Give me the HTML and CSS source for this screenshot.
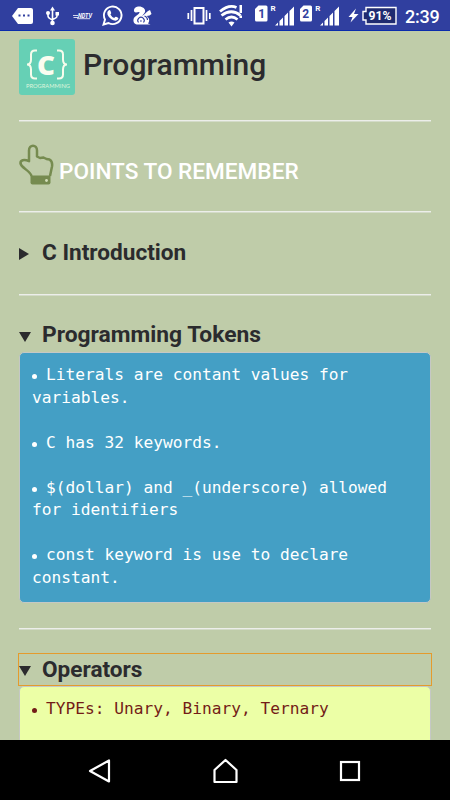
FILE: index.html
```html
<!DOCTYPE html>
<html lang="en">
<head>
    <meta charset="UTF-8">
    <meta name="viewport" content="width=device-width, initial-scale=1.0">
    <title>C Programming</title>
    <link rel="stylesheet" href="styles.css">
</head>
<body>
    <div class="status-bar">
        <svg class="icon-left" width="162" height="30" viewBox="0 0 162 30">
            <!-- message -->
            <path d="M18 8h13q2 0 2 2v12q0 2-2 2H18l-6-8z" fill="#fff"/>
            <path d="M18.500 14.500h2v2h-2zM23 14.500h2v2h-2zM27.500 14.500h2v2h-2z" fill="#303f9f"/>
            <!-- usb -->
            <path d="M52.500 10v12M48 13v3q0 2 4.500 4M57 14v2q0 2-4.500 3.500" fill="none" stroke="#fff" stroke-width="1.600"/>
            <path d="M52.500 6.500l2.500 4h-5zM55.500 12h3.500v3.500h-3.500z" fill="#fff"/>
            <circle cx="48" cy="13" r="2" fill="#fff"/>
            <circle cx="52.500" cy="23" r="2.300" fill="#fff"/>
            <!-- news -->
            <path d="M73 15.500h5M73.500 17.500h5" stroke="#fff" stroke-width=".8"/>
            <text x="78" y="17.500" class="news" textLength="14" lengthAdjust="spacingAndGlyphs">NDTV</text>
            <path d="M77 18.700h13" stroke="#fff" stroke-width=".8"/>
            <!-- whatsapp -->
            <path d="M103.500 24.500l1.500-5a8.800 8.800 0 1 1 3.500 3.500z" fill="none" stroke="#fff" stroke-width="1.900"/>
            <path d="M108.500 10.500q1.500-1 2 .5l.7 1.700q.3.700-.8 1.800 1.300 2.500 3.800 3.600 1.200-1.700 1.900-1.400l2 1q.8.400-.2 1.900-1.600 1.800-4.500.6-4.500-1.800-6-6-.6-2.400 1.100-3.700z" fill="#fff"/>
            <!-- squirrel -->
            <path d="M138 6.500c4-.5 8 2 7 5.500-.5 1.500-2 2.500-3 4 2-1 4-3.500 6-5l2-1 1.500 4-2 1.500-3 .5c3 2 3.500 5 1.500 7.500l2.500 1H138c-3 0-5-2-4.500-5 .5-3.500 5-4.500 6-7 .5-1-2-.5-3.500 0-3 0-3-5 2-6z" fill="#fff"/>
            <path d="M138.500 22.500a3.200 3.200 0 1 1 5 0M140 21h1.800M144.500 16q3 1 3 4" fill="none" stroke="#303f9f" stroke-width="1.100"/>
        </svg>
        <svg class="icon-right" width="168" height="30" viewBox="184 0 168 30">
            <!-- vibrate -->
            <path d="M194.500 8h9v15.500h-9z" fill="none" stroke="#fff" stroke-width="2"/>
            <path d="M191.500 10v11M188.300 13v6M206.500 10v11M209.800 13v6" stroke="#fff" stroke-width="1.700"/>
            <!-- wifi -->
            <path d="M220 11.500q9-7.500 16.500-4M221.500 15.500q10-7.500 19 0M225.500 19.500q6-5 12 0" fill="none" stroke="#fff" stroke-width="2.800"/>
            <path d="M228.500 22.500q3-2 6 0l-3 4zM239.500 5h2.500v8h-2.500zM239.500 15.500h2.500v2.500h-2.500z" fill="#fff"/>
            <!-- sim 1 -->
            <path d="M258.500 5.500H266q1.500 0 1.500 1.500v13q0 1.500-1.500 1.500h-9.500q-1.500 0-1.500-1.500V9z" fill="#fff"/>
            <text x="258.300" y="18" class="sim">1</text>
            <text x="270.500" y="10.500" class="roaming">R</text>
            <path d="M275 25.500l3-3v3zM279.500 21l3.500-3.500v8h-3.500zM284.500 16l3.500-3.500v13h-3.500zM289.500 11l4.500-4.500v19h-4.500z" fill="#fff"/>
            <!-- sim 2 -->
            <path d="M303.500 5.500h7q1.500 0 1.500 1.500v13q0 1.500-1.500 1.500h-9q-1.500 0-1.500-1.500V9z" fill="#fff"/>
            <text x="302.300" y="18" class="sim">2</text>
            <text x="315.300" y="10.500" class="roaming">R</text>
            <path d="M320 25.500l3-3v3zM324.500 21l3.500-3.500v8h-3.500zM329.500 16l3.500-3.500v13h-3.500zM334.500 11l4.500-4.500v19h-4.500z" fill="#fff"/>
        </svg>
        <svg class="icon-battery" width="50" height="30" viewBox="348 0 50 30">
            <path d="M356 8.500l-7.500 8.500h4l-2 5.500 8-8.500h-4.500z" fill="#fff"/>
            <path d="M366 7.500h30v16.500h-30v-4h-3v-8.500h3z" fill="#202b70" stroke="#fff" stroke-width="1.400"/>
            <text x="368.500" y="20" class="battery" textLength="23" lengthAdjust="spacingAndGlyphs">91%</text>
        </svg>
        <span class="clock">2:39</span>
    </div>

    <div class="container">
        <div class="header">
            <svg class="logo" width="56" height="56" viewBox="0 0 56 56">
                <rect width="56" height="56" rx="3" fill="#66d0b5"/>
                <path d="M18 11.500h-2q-4 0-4 4v5q0 5-4 5 4 0 4 5v5q0 4 4 4h2M38 11.500h2q4 0 4 4v5q0 5 4 5-4 0-4 5v5q0 4-4 4h-2" fill="none" stroke="#f7fcec" stroke-width="2"/>
                <text x="18" y="35.500" class="logo-c" textLength="18" lengthAdjust="spacingAndGlyphs">C</text>
                <text x="7" y="48.500" class="logo-name" textLength="44" lengthAdjust="spacingAndGlyphs">PROGRAMMING</text>
            </svg>
            <h1>Programming</h1>
        </div>
        <hr>
        <div class="points">
            <svg width="36" height="42" viewBox="0 0 36 42">
                <path d="M12.500 32C12 27.500 2 23.500 1.500 19.500c-.3-3 3-4.800 8.500-2.300V6.500c0-6.500 8-6.500 8 0v6l3 1.500 3.500-.5 3 1.500 3 .5c2.500 1.500 3 4 2.500 7L31 32" fill="none" stroke="#768b50" stroke-width="2.500" stroke-linejoin="round"/>
                <path d="M11.500 31.500h20v7q0 2-2 2h-16q-2 0-2-2z" fill="#768b50"/>
                <circle cx="27.500" cy="36.500" r="1.400" fill="#d5e0bb"/>
            </svg>
            <h2>POINTS TO REMEMBER</h2>
        </div>
        <hr>
        <details class="topic">
            <summary>C Introduction</summary>
        </details>
        <hr>
        <details class="topic tokens" open>
            <summary>Programming Tokens</summary>
            <div class="notes blue">
                <p><i class="dot"></i>Literals are contant values for<br>variables.</p>
                <p><i class="dot"></i>C has 32 keywords.</p>
                <p><i class="dot"></i>$(dollar) and _(underscore) allowed<br>for identifiers</p>
                <p><i class="dot"></i>const keyword is use to declare<br>constant.</p>
            </div>
        </details>
        <hr>
        <details class="topic operators" open>
            <summary>Operators</summary>
            <div class="notes yellow">
                <p><i class="dot"></i>TYPEs: Unary, Binary, Ternary</p>
            </div>
        </details>
    </div>

    <div class="nav-bar">
        <svg width="24" height="26" viewBox="0 0 24 26">
            <path d="M21 2.500v21L2 13z" fill="none" stroke="#fff" stroke-width="2.200" stroke-linejoin="round"/>
        </svg>
        <svg width="26" height="26" viewBox="0 0 26 26">
            <path d="M1.500 12L12.500 2l11 10v12h-22z" fill="none" stroke="#fff" stroke-width="2.200" stroke-linejoin="round"/>
        </svg>
        <svg width="22" height="26" viewBox="0 0 22 26">
            <rect x="2" y="4" width="18" height="18" fill="none" stroke="#fff" stroke-width="2.200"/>
        </svg>
    </div>
</body>
</html>
```

FILE: styles.css
```css
* {
    box-sizing: border-box;
}
body {
    margin: 0;
    height: 800px;
    display: flex;
    flex-direction: column;
    overflow: hidden;
    background-color: #bfcca9;
    font-family: Roboto, sans-serif;
    color: #2b2b2e;
}
.status-bar {
    display: flex;
    flex: none;
    height: 31px;
    background: #303f9f;
    border-bottom: 1px solid #0a2bab;
    color: white;
}
.icon-right {
    margin-left: 22px;
}
.icon-battery {
    margin-left: -4px;
}
.news {
    font: italic bold 7px Roboto, sans-serif;
    fill: white;
}
.sim {
    font: bold 12px Roboto, sans-serif;
    fill: #303f9f;
}
.roaming {
    font: bold 8px Roboto, sans-serif;
    fill: white;
}
.battery {
    font: bold 12px Roboto, sans-serif;
    fill: white;
}
.clock {
    margin-left: 7px;
    font-size: 18px;
    font-weight: 500;
    line-height: 33px;
    letter-spacing: -0.2px;
}
.container {
    flex: 1;
    min-height: 0;
    overflow: hidden;
    padding: 8px 19px 0;
}
.header {
    display: flex;
    height: 56px;
}
.logo-c {
    font: 800 27px "Open Sans", sans-serif;
    fill: #fafdf0;
}
.logo-name {
    font: 6px Lato, sans-serif;
    fill: #dff5dc;
}
h1 {
    margin: 0 0 0 8px;
    font-size: 30px;
    font-weight: 500;
    line-height: 52px;
}
hr {
    height: 2px;
    margin: 0;
    border: none;
    border-top: 1px solid #eceeea;
    background: #d3dbc8;
}
.header + hr {
    margin-top: 25px;
}
.points {
    display: flex;
    height: 89px;
    padding-top: 22px;
}
h2 {
    margin: 0 0 0 4px;
    font-size: 22.6px;
    font-weight: 500;
    line-height: 55px;
    color: white;
}
.topic {
    height: 81px;
    padding-top: 23px;
}
.tokens {
    height: 332px;
}
.operators {
    height: 140px;
    padding-top: 24px;
}
summary {
    display: flex;
    align-items: center;
    height: 32px;
    font-size: 22.6px;
    font-weight: bold;
    list-style: none;
}
summary::before {
    content: "";
    width: 0;
    margin-right: 13px;
    border-left: 10px solid #2b2b2e;
    border-top: 6px solid transparent;
    border-bottom: 6px solid transparent;
    position: relative;
    top: 2px;
}
details[open] summary::before {
    margin-right: 11px;
    border-top: 10px solid #2b2b2e;
    border-bottom: none;
    border-left: 6px solid transparent;
    border-right: 6px solid transparent;
}
.tokens summary {
    height: 33px;
    padding-bottom: 2px;
    font-size: 22.8px;
}
.operators summary {
    height: 31px;
    padding-bottom: 1px;
    outline: 1px solid #e49b2d;
}
.notes {
    height: 251px;
    padding: 11px 12px;
    border: 1px solid #c5c8c5;
    border-radius: 5px;
    font-family: "DejaVu Sans Mono", monospace;
    font-size: 16.2px;
    line-height: 22.5px;
}
.notes p {
    margin: 0 0 22.5px;
    white-space: nowrap;
}
.blue {
    background: #449fc5;
    color: white;
}
.yellow {
    margin-top: 1px;
    background: #ecffa6;
    color: #731c17;
}
.dot {
    display: inline-block;
    width: 5px;
    height: 5px;
    margin-right: 9px;
    border-radius: 50%;
    background: currentColor;
    vertical-align: 1px;
}
.nav-bar {
    display: flex;
    flex: none;
    justify-content: space-between;
    align-items: center;
    height: 60px;
    padding: 2px 89px 0 88px;
    background: black;
}
```
